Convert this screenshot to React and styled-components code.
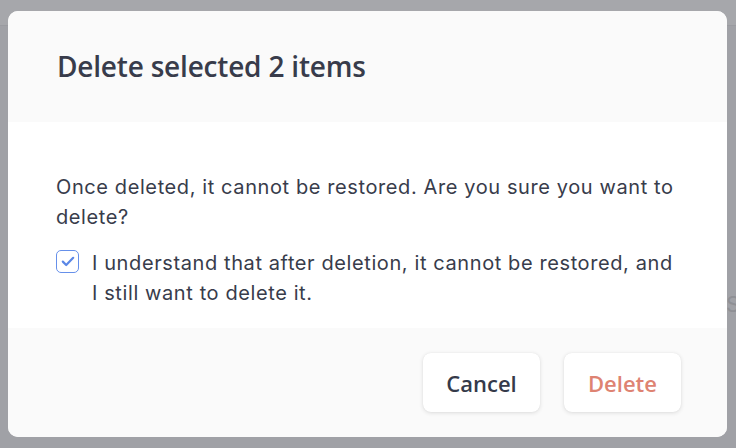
import React, { useState } from 'react';
import styled, { createGlobalStyle } from 'styled-components';

const GlobalStyle = createGlobalStyle`
  html, body {
    margin: 0;
    padding: 0;
  }
  body {
    width: 736px;
    height: 448px;
    overflow: hidden;
    background: #a0a1a6;
    font-family: Inter, "Open Sans", sans-serif;
  }
`;

const Backdrop = styled.div`
  position: relative;
  width: 736px;
  height: 448px;
  overflow: hidden;
  background: #a0a1a6;
  box-sizing: border-box;
  padding: 11px 9px 11px 8px;
`;

const TopStrip = styled.div`
  position: absolute;
  top: 0;
  left: 0;
  right: 0;
  height: 25px;
  background: #a6a7ab;
  border-bottom: 1px solid #9a9ba0;
`;

const Ghost = styled.span`
  position: absolute;
  top: 291px;
  left: 726px;
  font-size: 22px;
  white-space: nowrap;
  color: #8f9095;
`;

const Modal = styled.div`
  position: relative;
  height: 426px;
  border-radius: 10px;
  overflow: hidden;
  display: flex;
  flex-direction: column;
  background: #fafafa;
`;

const Header = styled.div`
  height: 111px;
  box-sizing: border-box;
  padding: 36px 49px 0;
  background: #fafafa;
`;

const Title = styled.h2`
  margin: 0;
  font-family: "Open Sans", sans-serif;
  font-weight: 600;
  font-size: 28px;
  line-height: 38px;
  color: #383c4b;
  letter-spacing: -0.2px;
`;

const Body = styled.div`
  height: 206px;
  box-sizing: border-box;
  background: #ffffff;
  padding: 50px 49px 0 48px;
  color: #383c4b;
  font-size: 20px;
  line-height: 30px;
  letter-spacing: 0.6px;
`;

const Text = styled.p`
  margin: 0 0 16px;
`;

const CheckRow = styled.label`
  display: flex;
  align-items: flex-start;
  gap: 13px;
  cursor: pointer;
`;

const Box = styled.span`
  flex: none;
  width: 23px;
  height: 23px;
  margin-top: 2px;
  box-sizing: border-box;
  border: 1.5px solid #6690ea;
  border-radius: 5px;
  display: flex;
  align-items: center;
  justify-content: center;
  background: #fff;
`;

const Footer = styled.div`
  flex: 1;
  background: #fafafa;
  display: flex;
  justify-content: flex-end;
  align-items: flex-start;
  gap: 24px;
  padding: 25px 46px 0 0;
`;

const Button = styled.button`
  width: 117px;
  height: 59px;
  border: none;
  border-radius: 8px;
  background: #ffffff;
  box-shadow: 0 1px 4px rgba(0, 0, 0, 0.12), 0 0 1px rgba(0, 0, 0, 0.08);
  font-family: "Open Sans", sans-serif;
  font-weight: 600;
  font-size: 22px;
  color: ${p => (p.$danger ? '#de8372' : '#353a4a')};
  cursor: pointer;
`;

export default function App() {
  const [checked, setChecked] = useState(true);
  return (
    <>
      <GlobalStyle />
      <Backdrop>
        <TopStrip />
        <Ghost>Sc</Ghost>
        <Modal>
          <Header>
            <Title>Delete selected 2 items</Title>
          </Header>
          <Body>
            <Text>Once deleted, it cannot be restored. Are you sure you want to delete?</Text>
            <CheckRow onClick={() => setChecked(!checked)}>
              <Box>
                {checked && (
                  <svg width="14" height="11" viewBox="0 0 14 11">
                    <path d="M1.8 5.6 L5.2 9 L12.2 1.8" fill="none" stroke="#5b87e6" strokeWidth="2.2" strokeLinecap="round" strokeLinejoin="round" />
                  </svg>
                )}
              </Box>
              <span>I understand that after deletion, it cannot be restored, and I still want to delete it.</span>
            </CheckRow>
          </Body>
          <Footer>
            <Button>Cancel</Button>
            <Button $danger>Delete</Button>
          </Footer>
        </Modal>
      </Backdrop>
    </>
  );
}
